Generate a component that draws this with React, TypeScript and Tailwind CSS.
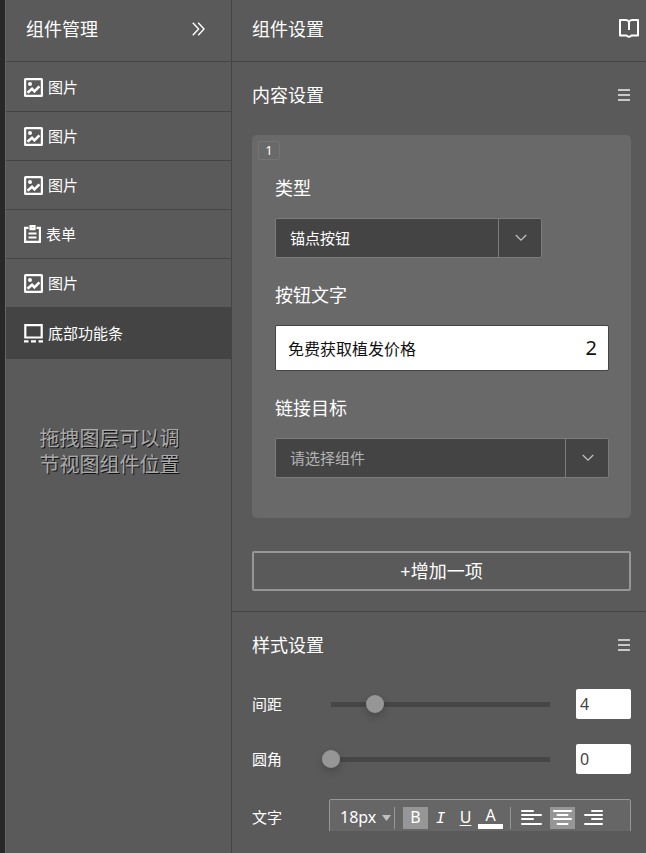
import React, { useState } from 'react';

type LayerType = 'image' | 'form' | 'footer';

interface Layer {
  id: number;
  type: LayerType;
  name: string;
}

const LAYERS: Layer[] = [
  { id: 1, type: 'image', name: '图片' },
  { id: 2, type: 'image', name: '图片' },
  { id: 3, type: 'image', name: '图片' },
  { id: 4, type: 'form', name: '表单' },
  { id: 5, type: 'image', name: '图片' },
  { id: 6, type: 'footer', name: '底部功能条' },
];

const MAX_TEXT = 10;

function LayerIcon({ type }: { type: LayerType }) {
  if (type === 'form') {
    return (
      <svg width="17" height="18" viewBox="0 0 17 18" fill="none" stroke="currentColor" strokeWidth="2.2" className="shrink-0">
        <path d="M4.5 2.800H1.100v14.100h14.800V2.800h-3.400" />
        <path d="M6.500 1.200h4v3h-4z" fill="currentColor" fillOpacity="0.5" />
        <path d="M4.500 8.500h8M4.500 12.500h8" strokeWidth="2" />
      </svg>
    );
  }
  if (type === 'footer') {
    return (
      <svg width="19" height="19" viewBox="0 0 19 19" fill="none" stroke="currentColor" strokeWidth="2.2" className="shrink-0">
        <path d="M1.300 1.200h16.400v12.300H1.300z" />
        <path d="M0 17.300h4.500M7 17.300h5M14.500 17.300H19" />
      </svg>
    );
  }
  return (
    <svg width="19" height="19" viewBox="0 0 19 19" fill="none" stroke="currentColor" className="shrink-0">
      <rect x="1.100" y="1.100" width="16.800" height="16.800" rx="0.5" strokeWidth="2.2" />
      <circle cx="6" cy="6" r="2" fill="currentColor" stroke="none" />
      <path d="M3.500 14.700l4.500-4 2.400 2.600 5-5" strokeWidth="2.600" />
    </svg>
  );
}

function ArrowDown() {
  return (
    <span className="pointer-events-none absolute inset-y-0 right-0 flex w-11 items-center justify-center border-l border-[#7a7a7a] text-[#c4c4c4]">
      <svg width="12" height="8" viewBox="0 0 12 8" fill="none" stroke="currentColor" strokeWidth="1.2">
        <path d="M0.8 1l5.2 5.2L11.2 1" />
      </svg>
    </span>
  );
}

function MenuButton({ label }: { label: string }) {
  return (
    <button type="button" aria-label={label} className="text-[#c8c8c8]">
      <svg width="13" height="12" viewBox="0 0 13 12" fill="currentColor">
        <path d="M0 0h12v2H0zM0 5h12v2H0zM0 10h12v2H0z" />
      </svg>
    </button>
  );
}

interface SliderRowProps {
  id: string;
  label: string;
  value: number;
  onChange: (v: number) => void;
}

function SliderRow({ id, label, value, onChange }: SliderRowProps) {
  return (
    <div className="flex h-[30px] items-center">
      <label htmlFor={id} className="w-[70px] shrink-0 text-[15px]">{label}</label>
      <input
        id={id}
        type="range"
        min={0}
        max={20}
        value={value}
        onChange={(e) => onChange(Number(e.target.value))}
        className="h-[18px] min-w-0 flex-1 appearance-none bg-[linear-gradient(#464646,#464646)] bg-[length:calc(100%-18px)_5px] bg-center bg-no-repeat [&::-webkit-slider-thumb]:size-[18px] [&::-webkit-slider-thumb]:appearance-none [&::-webkit-slider-thumb]:rounded-full [&::-webkit-slider-thumb]:bg-[#969696] [&::-webkit-slider-thumb]:shadow-[0_4px_8px_rgba(0,0,0,0.2)]"
      />
      <input
        type="text"
        aria-label={`${label}数值`}
        value={value}
        onChange={(e) => onChange(Number(e.target.value) || 0)}
        className="ml-[17px] h-[30px] w-[55px] rounded-[2px] bg-white px-1 text-[16px] text-[#444]"
      />
    </div>
  );
}

export default function App() {
  const [activeId, setActiveId] = useState(6);
  const [text, setText] = useState('免费获取植发价格');
  const [gap, setGap] = useState(4);
  const [radius, setRadius] = useState(0);
  const [align, setAlign] = useState('center');

  return (
    <div className="flex h-screen overflow-hidden border-l-[5px] border-[#282828] bg-[#5a5a5a] font-['Noto_Sans','Noto_Sans_CJK_SC',sans-serif] text-white">
      {/* Layers */}
      <aside className="flex w-[227px] shrink-0 flex-col border-r border-l border-r-[#444] border-l-[#666]">
        <header className="flex h-[62px] shrink-0 items-center justify-between border-b border-[#444] pr-[26px] pb-[3px] pl-5">
          <h2 className="text-[18px] leading-6">组件管理</h2>
          <button type="button" aria-label="收起">
            <svg width="13" height="14" viewBox="0 0 13 14" fill="none" stroke="currentColor" strokeWidth="1.4">
              <path d="M0.8 0.8L6.6 7 0.8 13.2M6.2 0.8L12 7l-5.8 6.2" />
            </svg>
          </button>
        </header>

        <ul className="pt-px">
          {LAYERS.map((layer) => (
            <li key={layer.id}>
              <button
                type="button"
                onClick={() => setActiveId(layer.id)}
                className={`flex w-full items-center gap-[5px] border-b border-[#444] pl-[18px] text-[15px] ${
                  layer.id === activeId ? 'h-[51px] bg-[#444]' : 'h-[49px]'
                }`}
              >
                <LayerIcon type={layer.type} />
                <span>{layer.name}</span>
              </button>
            </li>
          ))}
        </ul>

        <p className="mx-auto mt-[67px] w-[160px] pl-[1px] text-[20px] leading-[26px] text-[#aaa] [text-shadow:1px_1px_0_#111]">
          拖拽图层可以调节视图组件位置
        </p>
      </aside>

      {/* Settings */}
      <main className="flex min-w-0 flex-1 flex-col pb-[22px]">
        <header className="flex h-[62px] shrink-0 items-center justify-between border-b border-[#444] pr-[7px] pb-[3px] pl-5">
          <h2 className="text-[18px] leading-6">组件设置</h2>
          <button type="button" aria-label="帮助文档">
            <svg width="20" height="19" viewBox="0 0 20 19" fill="none" stroke="currentColor" strokeWidth="2" strokeLinejoin="round" className="mb-[2px]">
              <path d="M10 3C9.400 1.600 8.400 1 7 1H1v15.500h6.500c.6 0 .8 1.300 2.500 1.300s1.900-1.300 2.500-1.300H19V1h-6c-1.400 0-2.400.6-3 2v8" />
            </svg>
          </button>
        </header>

        <div className="min-h-0 flex-1 overflow-hidden">
          <section className="border-b border-[#444] pt-[21px] pr-[15px] pb-5 pl-5">
            <div className="flex items-center justify-between">
              <h3 className="text-[18px] leading-6">内容设置</h3>
              <MenuButton label="内容设置菜单" />
            </div>

            <div className="relative mt-7 flex flex-col gap-[25px] rounded-[5px] bg-[#696969] pt-[41px] pr-[22px] pb-10 pl-[23px]">
              <span className="absolute top-[6px] left-[6px] flex h-[19px] w-[22px] items-center justify-center rounded-[2px] border border-[#757575] text-[13px]">
                1
              </span>

              <div>
                <label htmlFor="type" className="block text-[18px] leading-6">类型</label>
                <div className="relative mt-[18px] w-4/5">
                  <select
                    id="type"
                    className="block h-10 w-full appearance-none rounded-[2px] border border-[#7a7a7a] bg-[#444] pl-[14px] text-[15px]"
                  >
                    <option>锚点按钮</option>
                  </select>
                  <ArrowDown />
                </div>
              </div>

              <div>
                <label htmlFor="text" className="block text-[18px] leading-6">按钮文字</label>
                <div className="relative mt-[18px]">
                  <input
                    id="text"
                    type="text"
                    value={text}
                    maxLength={MAX_TEXT}
                    onChange={(e) => setText(e.target.value)}
                    className="block h-[46px] w-full rounded-[2px] border border-[#444] bg-white pr-10 pl-3 text-[16px] text-[#111]"
                  />
                  <span className="pointer-events-none absolute inset-y-0 right-3 flex items-center text-[20px] text-[#111]">
                    {MAX_TEXT - text.length}
                  </span>
                </div>
              </div>

              <div>
                <label htmlFor="target" className="block text-[18px] leading-6">链接目标</label>
                <div className="relative mt-[18px]">
                  <select
                    id="target"
                    className="block h-10 w-full appearance-none rounded-[2px] border border-[#7a7a7a] bg-[#444] pl-[14px] text-[15px] text-[#b4b4b4]"
                  >
                    <option>请选择组件</option>
                  </select>
                  <ArrowDown />
                </div>
              </div>
            </div>

            <button type="button" className="mt-[33px] h-10 w-full rounded-[2px] border-2 border-[#969696] text-[18px] leading-6">
              +增加一项
            </button>
          </section>

          <section className="pt-[21px] pr-[15px] pl-5">
            <div className="flex items-center justify-between">
              <h3 className="text-[18px] leading-6">样式设置</h3>
              <MenuButton label="样式设置菜单" />
            </div>

            <div className="mt-8 flex flex-col gap-[25px]">
              <SliderRow id="gap" label="间距" value={gap} onChange={setGap} />
              <SliderRow id="radius" label="圆角" value={radius} onChange={setRadius} />

              <div className="flex items-center">
                <label htmlFor="size" className="w-[77px] shrink-0 text-[15px]">文字</label>
                <div className="flex h-[37px] min-w-0 flex-1 items-center rounded-[2px] border border-[#969696] bg-[#666]">
                  <div className="relative mr-2 h-[22px] w-[65px] border-r border-[#969696]">
                    <select id="size" className="block h-full w-full appearance-none pb-[2px] pl-[10px] text-[16px] leading-5">
                      <option>18px</option>
                    </select>
                    <svg width="9" height="6" viewBox="0 0 9 6" className="pointer-events-none absolute top-2 right-[3px]">
                      <path d="M0 0h9L4.500 6z" fill="#c0c0c0" />
                    </svg>
                  </div>

                  <button type="button" aria-label="加粗" className="h-[22px] w-[25px] bg-[#969696] pb-[2px] text-[16px] leading-5">B</button>
                  <button type="button" aria-label="斜体" className="h-[22px] w-[25px] pt-[2px] font-['Liberation_Mono',monospace] text-[16px] leading-5 italic">I</button>
                  <button type="button" aria-label="下划线" className="h-[22px] w-[25px] pb-[2px] text-[16px] leading-5 underline underline-offset-2">U</button>
                  <button type="button" aria-label="文字颜色" className="h-[22px] w-[25px] border-b-[5px] border-white text-[16px] leading-[17px]">A</button>

                  <div className="mx-[7px] h-[22px] w-px bg-[#969696]" />

                  <div className="flex gap-[6px] pl-px">
                    <button
                      type="button"
                      aria-label="左对齐"
                      onClick={() => setAlign('left')}
                      className={`flex h-[22px] w-[25px] items-center justify-center pb-[2px] ${align === 'left' ? 'bg-[#969696]' : ''}`}
                    >
                      <svg width="21" height="16" viewBox="0 0 21 16" fill="none" stroke="currentColor" strokeWidth="2" strokeLinecap="round">
                        <path d="M1 2h11M1 6h19M1 10h11M1 15h19" />
                      </svg>
                    </button>
                    <button
                      type="button"
                      aria-label="居中"
                      onClick={() => setAlign('center')}
                      className={`flex h-[22px] w-[25px] items-center justify-center pb-[2px] ${align === 'center' ? 'bg-[#969696]' : ''}`}
                    >
                      <svg width="19" height="16" viewBox="0 0 19 16" fill="none" stroke="currentColor" strokeWidth="2" strokeLinecap="round">
                        <path d="M1 2h17M4.500 6h10M1 10h17M4.500 15h10" />
                      </svg>
                    </button>
                    <button
                      type="button"
                      aria-label="右对齐"
                      onClick={() => setAlign('right')}
                      className={`flex h-[22px] w-[25px] items-center justify-center pb-[2px] ${align === 'right' ? 'bg-[#969696]' : ''}`}
                    >
                      <svg width="19" height="16" viewBox="0 0 19 16" fill="none" stroke="currentColor" strokeWidth="2" strokeLinecap="round">
                        <path d="M8 2h10M1 6h17M8 10h10M1 15h17" />
                      </svg>
                    </button>
                  </div>
                </div>
              </div>
            </div>
          </section>
        </div>
      </main>
    </div>
  );
}
